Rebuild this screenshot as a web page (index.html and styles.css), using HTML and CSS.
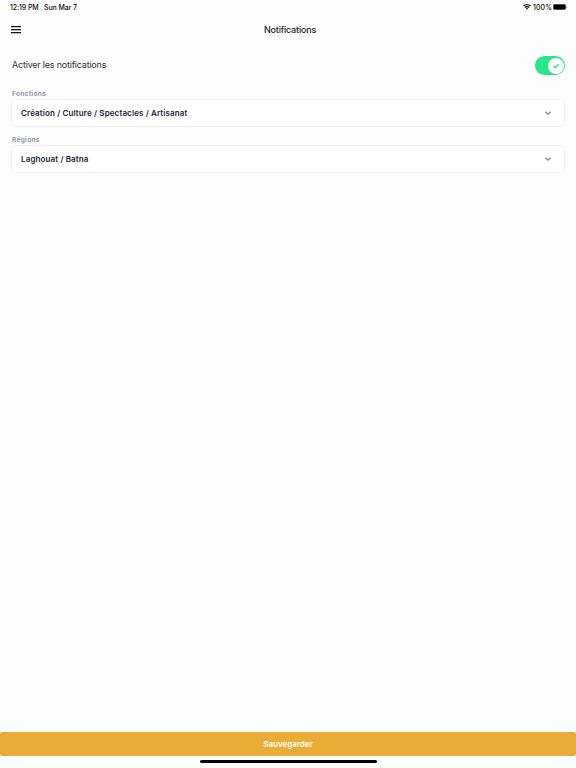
FILE: index.html
```html
<!DOCTYPE html>
<html lang="fr">
<head>
    <meta charset="UTF-8" />
    <title>Notifications</title>
    <link rel="stylesheet" href="styles.css">
</head>
<body>

<div class="status-bar">
    <span class="time">12:19 PM</span>
    <span class="date">Sun Mar 7</span>
    <svg class="wifi" width="8" height="6" viewBox="0 0 8 6">
        <path d="M0.5 2.1a5 5 0 0 1 7 0M1.8 3.5a3.1 3.1 0 0 1 4.4 0" fill="none" stroke="#111" stroke-width="1.1" />
        <path d="M2.8 4.5a1.7 1.7 0 0 1 2.4 0L4 5.8z" fill="#111" />
    </svg>
    <span class="percent">100%</span>
    <svg class="battery" width="15" height="6" viewBox="0 0 15 6">
        <rect x="0.25" y="0.25" width="12.5" height="5.5" rx="1.4" fill="#000" stroke="#777" stroke-width="0.5" />
        <path d="M13.5 2v2q.8-.3.8-1t-.8-1z" fill="#777" />
    </svg>
</div>

<header class="header">
    <button class="menu" aria-label="Menu">
        <svg width="10" height="8" viewBox="0 0 10 8">
            <path d="M0 .6h10M0 3.6h10M0 6.6h10" stroke="#111" stroke-width="1.2" />
        </svg>
    </button>
    <h1 class="title">Notifications</h1>
</header>

<main class="content">
    <div class="toggle-row">
        <span class="toggle-label">Activer les notifications</span>
        <div class="switch">
            <div class="knob">
                <svg width="6" height="6" viewBox="0 0 6 6">
                    <path d="M0.5 3L2.3 4.7L5.5 1.3" fill="none" stroke="#2ce48a" stroke-width="1.5" />
                </svg>
            </div>
        </div>
    </div>

    <div class="field">
        <div class="field-label">Fonctions</div>
        <div class="select">
            <span>Création / Culture / Spectacles / Artisanat</span>
            <svg class="chevron" width="8" height="6" viewBox="0 0 8 6">
                <path d="M1.3 1.8L4 4.1L6.7 1.8" fill="none" stroke="#8e8e94" stroke-width="1.4" />
            </svg>
        </div>
    </div>

    <div class="field">
        <div class="field-label">Régions</div>
        <div class="select">
            <span>Laghouat / Batna</span>
            <svg class="chevron" width="8" height="6" viewBox="0 0 8 6">
                <path d="M1.3 1.8L4 4.1L6.7 1.8" fill="none" stroke="#8e8e94" stroke-width="1.4" />
            </svg>
        </div>
    </div>
</main>

<button class="save">Sauvegarder</button>
<div class="home-indicator"></div>

</body>
</html>
```

FILE: styles.css
```css
* {
    box-sizing: border-box;
}

body {
    margin: 0;
    height: 768px;
    display: flex;
    flex-direction: column;
    background-color: #fdfdfd;
    color: #1c1c28;
    font-family: Inter, "Liberation Sans", sans-serif;
}

button {
    padding: 0;
    border: 0;
    font-family: inherit;
}

.status-bar {
    height: 14px;
    padding: 0 8px 0 10px;
    display: flex;
    align-items: center;
    color: #111;
    font-size: 7px;
    font-weight: 500;
    white-space: nowrap;
}

.time {
    width: 34px;
    letter-spacing: -0.1px;
}

.date {
    letter-spacing: -0.1px;
}

.wifi {
    margin-left: auto;
    margin-right: 2px;
}

.percent {
    margin-right: 1px;
}

.header {
    height: 31px;
    padding: 0 11px;
    display: grid;
    grid-template-columns: 1fr auto 1fr;
    align-items: center;
}

.menu {
    width: 10px;
    height: 7px;
    display: flex;
    background: none;
}

.title {
    margin: 0 0 0 4px;
    font-size: 9px;
    line-height: 12px;
    font-weight: 500;
    letter-spacing: -0.2px;
}

.content {
    flex: 1;
    padding: 11px 11px 0;
}

.toggle-row {
    height: 19px;
    display: flex;
    align-items: center;
    justify-content: space-between;
}

.toggle-label {
    margin-left: 1px;
    padding-bottom: 2px;
    font-size: 9px;
    letter-spacing: -0.21px;
    color: #333338;
}

.switch {
    width: 30px;
    height: 19px;
    padding: 1.5px;
    display: flex;
    justify-content: flex-end;
    border-radius: 10px;
    background-color: #2ce48a;
}

.knob {
    width: 16px;
    height: 16px;
    display: flex;
    align-items: center;
    justify-content: center;
    border-radius: 50%;
    background-color: #fff;
}

.field {
    height: 46px;
}

.toggle-row + .field {
    margin-top: 12px;
}

.field-label {
    height: 12px;
    padding-left: 1px;
    font-size: 6.5px;
    line-height: 14px;
    font-weight: 700;
    letter-spacing: 0.3px;
    color: #9496b4;
}

.select {
    height: 28px;
    padding: 0 12px 0 9px;
    display: flex;
    align-items: center;
    justify-content: space-between;
    border: 1px solid #f0f0f5;
    border-radius: 3px;
    background-color: #fff;
    color: #24243a;
    font-size: 8px;
    font-weight: 600;
    letter-spacing: 0.13px;
}

.save {
    height: 24px;
    border-radius: 2px;
    background-color: #e9ad37;
    color: #fff8e8;
    font-size: 8px;
    font-weight: 700;
    letter-spacing: -0.05px;
}

.home-indicator {
    width: 177px;
    height: 3px;
    margin: 4px auto 5px;
    border-radius: 2px;
    background-color: #000;
}
```
